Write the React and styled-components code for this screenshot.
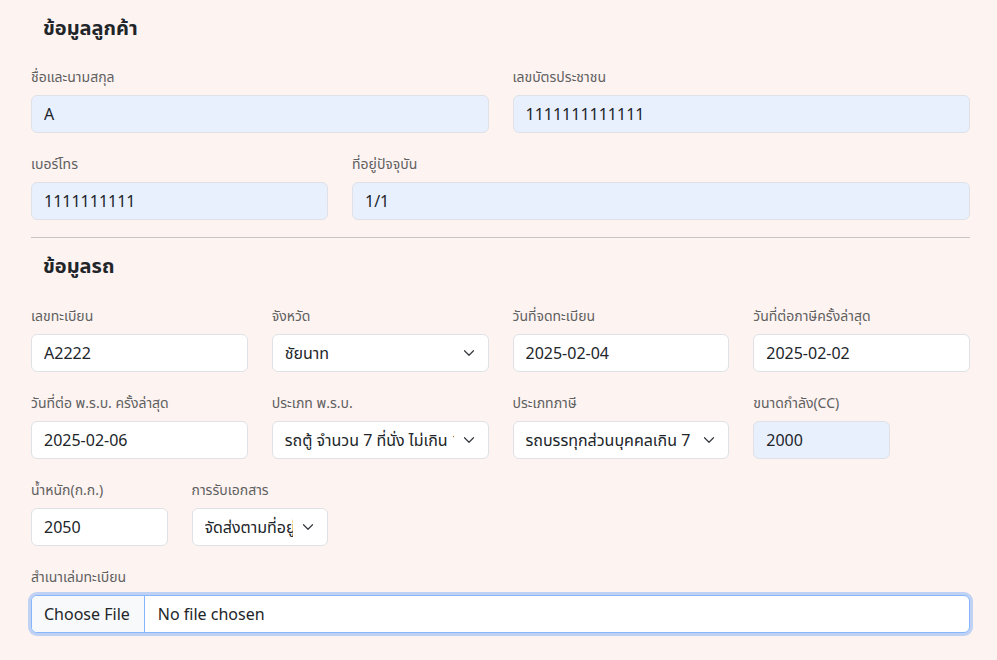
import React from 'react'
import styled, { createGlobalStyle } from 'styled-components'
import { ChevronDown } from 'lucide-react'

const GlobalStyle = createGlobalStyle`
  html, body {
    margin: 0;
    padding: 0;
    background: #fdf3f1;
    font-family: "Noto Sans", "Noto Sans Thai", sans-serif;
    color: #212529;
  }
  * { box-sizing: border-box; }
`

const Page = styled.div`
  padding: 13px 27px 24px 31px;
`
const SectionTitle = styled.h2`
  margin: ${(p) => (p.first ? '0 0 23px' : '13px 0 24px')};
  padding-left: 12px;
  font-size: 20px;
  line-height: 30px;
  font-weight: 700;
  color: #212529;
`
const Row = styled.div`
  display: grid;
  grid-template-columns: repeat(12, 1fr);
  column-gap: 24px;
  margin-bottom: 20px;
`
const Field = styled.div`
  grid-column: span ${(p) => p.span};
  display: flex;
  flex-direction: column;
`
const Label = styled.label`
  font-size: 14px;
  line-height: 21px;
  margin-bottom: 8px;
  color: #606060;
`
const Input = styled.input`
  height: 38px;
  width: 100%;
  padding: 0 12px;
  font: inherit;
  font-size: 16px;
  color: #212529;
  border: 1px solid #dee2e6;
  border-radius: 6px;
  background: ${(p) => (p.filled ? '#e8f0fe' : '#ffffff')};
  outline: none;
`
const SelectWrap = styled.div`
  position: relative;
  height: 38px;
`
const Select = styled.select`
  appearance: none;
  width: 100%;
  height: 38px;
  padding: 0 34px 0 12px;
  font: inherit;
  font-size: 16px;
  color: #212529;
  border: 1px solid #dee2e6;
  border-radius: 6px;
  background: #ffffff;
  outline: none;
`
const Chevron = styled(ChevronDown)`
  position: absolute;
  right: 11px;
  top: 10px;
  pointer-events: none;
  color: #343a40;
`
const Divider = styled.hr`
  margin: -3px 0 0;
  border: 0;
  border-top: 1px solid #c8c6c5;
`
const FileInput = styled.input`
  width: 100%;
  height: 38px;
  padding: 0 12px;
  font: inherit;
  font-size: 16px;
  color: #212529;
  background: #ffffff;
  border: 1px solid #86b7fe;
  border-radius: 6px;
  box-shadow: 0 0 0 3px rgba(13, 110, 253, 0.25);
  outline: none;
  overflow: hidden;

  &::file-selector-button {
    height: 36px;
    margin: 0 13px 0 -12px;
    padding: 0 14px 0 12px;
    font: inherit;
    font-size: 16px;
    color: #212529;
    background: #f8f9fa;
    border: 0;
    border-right: 1px solid #86b7fe;
    border-radius: 0;
  }
`

const TextField = ({ span, label, value, filled }) => (
  <Field span={span}>
    <Label>{label}</Label>
    <Input type="text" defaultValue={value} filled={filled} readOnly />
  </Field>
)

const SelectField = ({ span, label, value, options }) => (
  <Field span={span}>
    <Label>{label}</Label>
    <SelectWrap>
      <Select defaultValue={value}>
        {options.map((o) => (
          <option key={o}>{o}</option>
        ))}
      </Select>
      <Chevron size={18} strokeWidth={1.6} />
    </SelectWrap>
  </Field>
)

export default function App() {
  return (
    <Page>
      <GlobalStyle />
      <SectionTitle first>ข้อมูลลูกค้า</SectionTitle>
      <Row>
        <TextField span={6} label="ชื่อและนามสกุล" value="A" filled />
        <TextField span={6} label="เลขบัตรประชาชน" value="1111111111111" filled />
      </Row>
      <Row>
        <TextField span={4} label="เบอร์โทร" value="1111111111" filled />
        <TextField span={8} label="ที่อยู่ปัจจุบัน" value="1/1" filled />
      </Row>
      <Divider />
      <SectionTitle>ข้อมูลรถ</SectionTitle>
      <Row>
        <TextField span={3} label="เลขทะเบียน" value="A2222" />
        <SelectField span={3} label="จังหวัด" value="ชัยนาท" options={['ชัยนาท', 'กรุงเทพมหานคร']} />
        <TextField span={3} label="วันที่จดทะเบียน" value="2025-02-04" />
        <TextField span={3} label="วันที่ต่อภาษีครั้งล่าสุด" value="2025-02-02" />
      </Row>
      <Row>
        <TextField span={3} label="วันที่ต่อ พ.ร.บ. ครั้งล่าสุด" value="2025-02-06" />
        <SelectField
          span={3}
          label="ประเภท พ.ร.บ."
          value="รถตู้ จำนวน 7 ที่นั่ง ไม่เกิน 15 ที่นั่ง"
          options={['รถตู้ จำนวน 7 ที่นั่ง ไม่เกิน 15 ที่นั่ง', 'รถยนต์นั่งส่วนบุคคล']}
        />
        <SelectField
          span={3}
          label="ประเภทภาษี"
          value="รถบรรทุกส่วนบุคคลเกิน 7 ที่นั่ง"
          options={['รถบรรทุกส่วนบุคคลเกิน 7 ที่นั่ง', 'รถยนต์นั่งส่วนบุคคล']}
        />
        <TextField span={2} label="ขนาดกำลัง(CC)" value="2000" filled />
      </Row>
      <Row>
        <TextField span={2} label="น้ำหนัก(ก.ก.)" value="2050" />
        <SelectField span={2} label="การรับเอกสาร" value="จัดส่งตามที่อยู่" options={['จัดส่งตามที่อยู่', 'รับด้วยตนเอง']} />
      </Row>
      <Row>
        <Field span={12}>
          <Label>สำเนาเล่มทะเบียน</Label>
          <FileInput type="file" />
        </Field>
      </Row>
    </Page>
  )
}
